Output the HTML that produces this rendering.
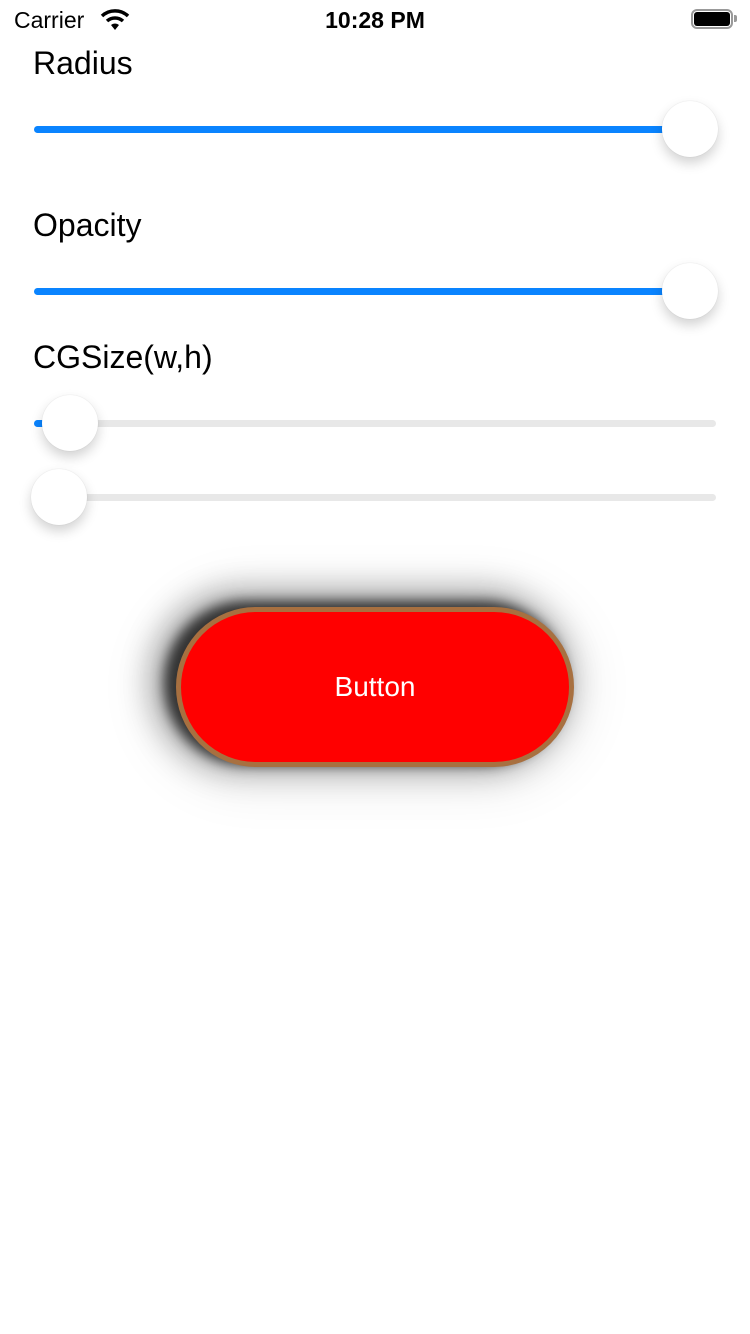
<!DOCTYPE html>
<html><head><meta charset="utf-8"><style>
body{margin:0;width:750px;height:1334px;background:#fff;position:relative;overflow:hidden;font-family:"Liberation Sans",sans-serif;color:#000}
.a{position:absolute}
.lbl{font-size:32px;left:33px}
.track{position:absolute;left:34px;width:682px;height:7px;border-radius:4px;background:#e8e8e8}
.fill{position:absolute;left:34px;height:7px;border-radius:4px;background:#0a84ff}
.thumb{position:absolute;width:56px;height:56px;border-radius:50%;background:#fff;box-shadow:0 6px 12px rgba(0,0,0,.18),0 0 1px rgba(0,0,0,.15)}
</style></head><body>
<div class="a" style="left:14px;top:7px;font-size:23px">Carrier</div>
<svg class="a" style="left:98px;top:8px" width="34" height="24" viewBox="0 0 34 24"><path d="M17 22 L13 17 A6 6 0 0 1 21 17 Z" fill="#000"/><path d="M9 13 A12 12 0 0 1 25 13" stroke="#000" stroke-width="3.5" fill="none"/><path d="M4 8 A19 19 0 0 1 30 8" stroke="#000" stroke-width="3.5" fill="none"/></svg>
<div class="a" style="left:0;width:750px;text-align:center;top:7px;font-size:23px;font-weight:bold">10:28 PM</div>
<div class="a" style="left:691px;top:9px;width:42px;height:20px;border:2px solid #999;border-radius:6px;box-sizing:border-box"></div>
<div class="a" style="left:694px;top:12px;width:36px;height:14px;background:#000;border-radius:3px"></div>
<div class="a" style="left:734px;top:15px;width:3px;height:7px;background:#999;border-radius:0 2px 2px 0"></div>

<div class="a lbl" style="top:45px">Radius</div>
<div class="fill" style="top:126px;width:656px"></div>
<div class="thumb" style="left:662px;top:101px"></div>

<div class="a lbl" style="top:207px">Opacity</div>
<div class="fill" style="top:288px;width:656px"></div>
<div class="thumb" style="left:662px;top:263px"></div>

<div class="a lbl" style="top:339px">CGSize(w,h)</div>
<div class="track" style="top:420px"></div><div class="fill" style="top:420px;width:36px"></div>
<div class="thumb" style="left:42px;top:395px"></div>
<div class="track" style="top:494px"></div>
<div class="thumb" style="left:31px;top:469px"></div>

<div class="a" style="left:176px;top:607px;width:398px;height:160px;border-radius:80px;background:#f00;border:5px solid #a87040;box-sizing:border-box;box-shadow:-10px -4px 12px 2px rgba(0,0,0,.7),-14px -6px 30px 12px rgba(0,0,0,.3),-8px 0 50px 22px rgba(0,0,0,.08);display:flex;align-items:center;justify-content:center;color:#fff;font-size:28px">Button</div>
</body></html>
